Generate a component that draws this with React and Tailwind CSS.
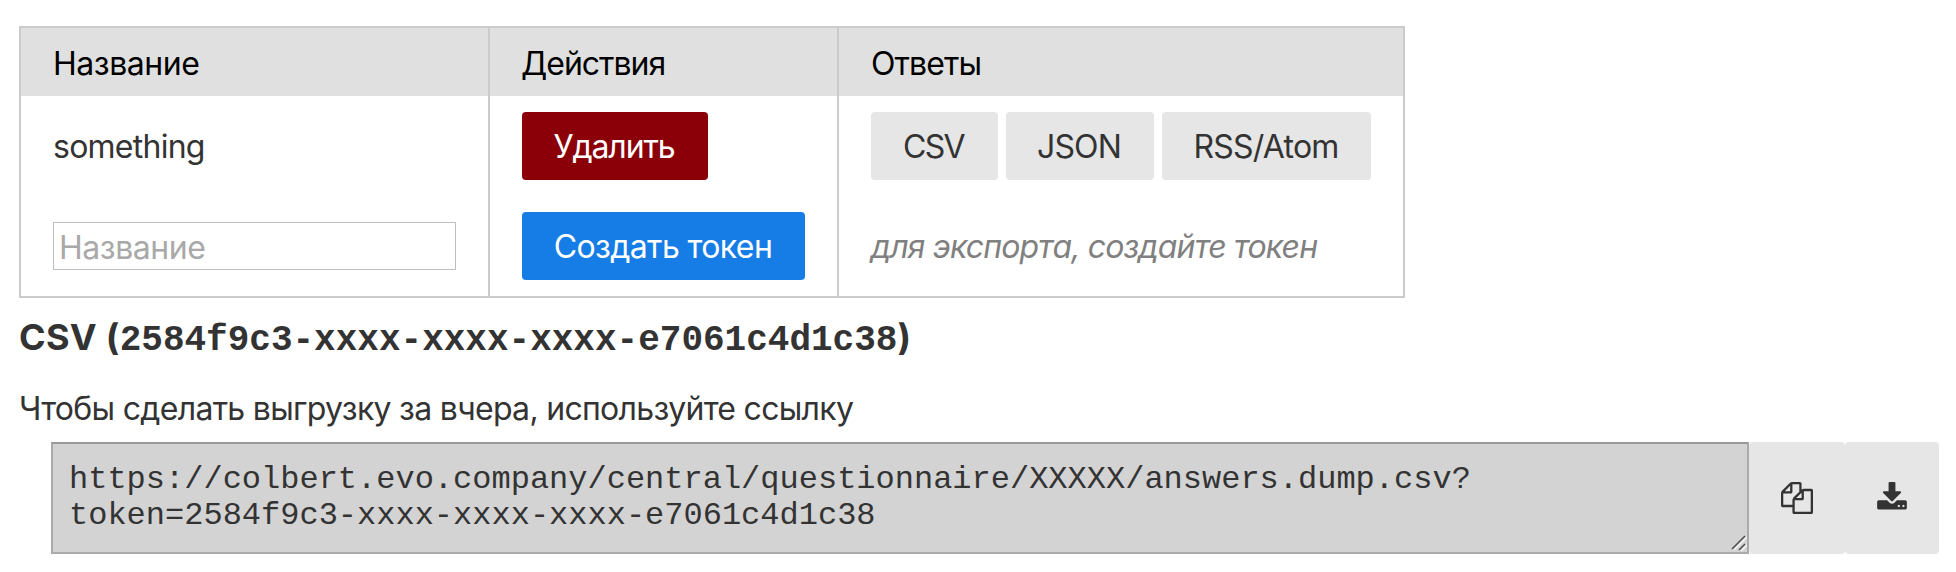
function CopyIcon() {
  return (
    <svg viewBox="0 0 1792 1792" className="size-8 fill-current" aria-hidden="true">
      <path d="M1696 384q40 0 68 28t28 68v1216q0 40-28 68t-68 28h-960q-40 0-68-28t-28-68v-288h-544q-40 0-68-28t-28-68v-672q0-40 20-88t48-76l408-408q28-28 76-48t88-20h416q40 0 68 28t28 68v328q68-40 128-40h416zm-544 213l-299 299h299v-299zm-640-384l-299 299h299v-299zm196 647l316-316v-416h-384v416q0 40-28 68t-68 28h-416v640h512v-256q0-40 20-88t48-76zm956 804v-1152h-384v416q0 40-28 68t-68 28h-416v640h896z" />
    </svg>
  );
}

function DownloadIcon() {
  return (
    <svg viewBox="0 0 1792 1792" className="size-8 fill-current" aria-hidden="true">
      <path d="M1344 1344q0-26-19-45t-45-19-45 19-19 45 19 45 45 19 45-19 19-45zm256 0q0-26-19-45t-45-19-45 19-19 45 19 45 45 19 45-19 19-45zm128-224v320q0 40-28 68t-68 28h-1472q-40 0-68-28t-28-68v-320q0-40 28-68t68-28h465l135 136q58 56 136 56t136-56l136-136h464q40 0 68 28t28 68zm-325-569q17 41-14 70l-448 448q-18 19-45 19t-45-19l-448-448q-31-29-14-70 17-39 59-39h256v-448q0-26 19-45t45-19h256q26 0 45 19t19 45v448h256q42 0 59 39z" />
    </svg>
  );
}

function Button({ className, children }) {
  return (
    <button type="button" className={`flex items-center justify-center rounded-[4px] whitespace-nowrap ${className}`}>
      {children}
    </button>
  );
}

export default function App() {
  return (
    <main className="h-[572px] w-[1956px] overflow-hidden bg-white pt-[26px] pl-[19px] font-['Inter',sans-serif] text-[32px] leading-[40px] text-[#333]">
      <table className="w-[1386px] table-fixed border-separate border-spacing-0 border-2 border-[#cbcbcb]">
        <colgroup>
          <col className="w-[467px]" />
          <col className="w-[349px]" />
          <col className="w-[566px]" />
        </colgroup>
        <thead>
          <tr className="h-[68px] bg-[#e0e0e0] text-left text-black">
            <th className="p-0 pt-[4px] pl-8 font-normal tracking-[-0.45px]">Название</th>
            <th className="border-l-2 border-[#cbcbcb] p-0 pt-[4px] pl-[31px] font-normal tracking-[-1px]">Действия</th>
            <th className="border-l-2 border-[#cbcbcb] p-0 pt-[4px] pl-8 font-normal tracking-[-0.9px]">Ответы</th>
          </tr>
        </thead>
        <tbody>
          <tr className="h-[100px]">
            <td className="p-0 pt-[2px] pl-8 tracking-[-0.75px]">something</td>
            <td className="border-l-2 border-[#cbcbcb] p-0 pl-8">
              <Button className="h-[68px] w-[186px] bg-[#8b0008] pt-[2px] pr-[2px] tracking-[-1.1px] text-white">Удалить</Button>
            </td>
            <td className="border-l-2 border-[#cbcbcb] p-0 pl-8">
              <div className="flex gap-2">
                <Button className="h-[68px] w-[127px] bg-[#e6e6e6] pt-[2px] pr-[2px] tracking-[-1.6px]">CSV</Button>
                <Button className="h-[68px] w-[148px] bg-[#e6e6e6] pt-[2px] pr-[2px] tracking-[-0.9px]">JSON</Button>
                <Button className="h-[68px] w-[209px] bg-[#e6e6e6] pt-[2px] pr-[1px] tracking-[-0.75px]">RSS/Atom</Button>
              </div>
            </td>
          </tr>
          <tr className="h-[100px]">
            <td className="p-0 pl-8">
              <input
                type="text"
                placeholder="Название"
                className="block h-12 w-[403px] border border-[#bfbfbf] bg-white pt-[2px] pl-[5px] tracking-[-0.45px] placeholder:text-[#a9a9a9]"
              />
            </td>
            <td className="border-l-2 border-[#cbcbcb] p-0 pl-8">
              <Button className="h-[68px] w-[283px] bg-[#167ce6] pt-[2px] pr-[1px] tracking-[-0.62px] text-white">Создать токен</Button>
            </td>
            <td className="border-l-2 border-[#cbcbcb] p-0 pt-[2px] pl-8 tracking-[-0.85px] text-[#808080] italic">
              для экспорта, создайте токен
            </td>
          </tr>
        </tbody>
      </table>

      <h3 className="mt-[15px] flex h-12 items-baseline text-[36px] leading-[48px] font-bold whitespace-pre">
        <span className="tracking-[0.3px]">CSV (</span>
        <code className="font-['Liberation_Mono',monospace]">2584f9c3-xxxx-xxxx-xxxx-e7061c4d1c38</code>
        <span>)</span>
      </h3>

      <p className="mt-[28px] tracking-[-0.7px]">Чтобы сделать выгрузку за вчера, используйте ссылку</p>

      <div className="mt-[13px] ml-8 flex h-28">
        <textarea
          readOnly
          defaultValue={"https://colbert.evo.company/central/questionnaire/XXXXX/answers.dump.csv?\ntoken=2584f9c3-xxxx-xxxx-xxxx-e7061c4d1c38"}
          className="block h-28 w-[1698px] resize-none overflow-hidden border-2 border-[#aaa] border-t-[#999] bg-[#d3d3d3] px-4 pt-[18px] font-['Liberation_Mono',monospace] text-[32px] leading-[36px]"
        />
        <svg viewBox="0 0 16 16" className="relative z-10 mb-[3px] -ml-[18px] size-4 self-end" fill="none" aria-hidden="true">
          <path d="M3 15 16 2M10 16l6-6" stroke="#f4f4f4" strokeWidth="1.5" />
          <path d="M1 14 14 1M8 15l6-6" stroke="#4d4d4d" strokeWidth="1.5" />
        </svg>
        <Button className="ml-[2px] h-28 w-24 bg-[#e6e6e6]">
          <CopyIcon />
        </Button>
        <Button className="h-28 w-[94px] bg-[#e6e6e6]">
          <DownloadIcon />
        </Button>
      </div>
    </main>
  );
}
